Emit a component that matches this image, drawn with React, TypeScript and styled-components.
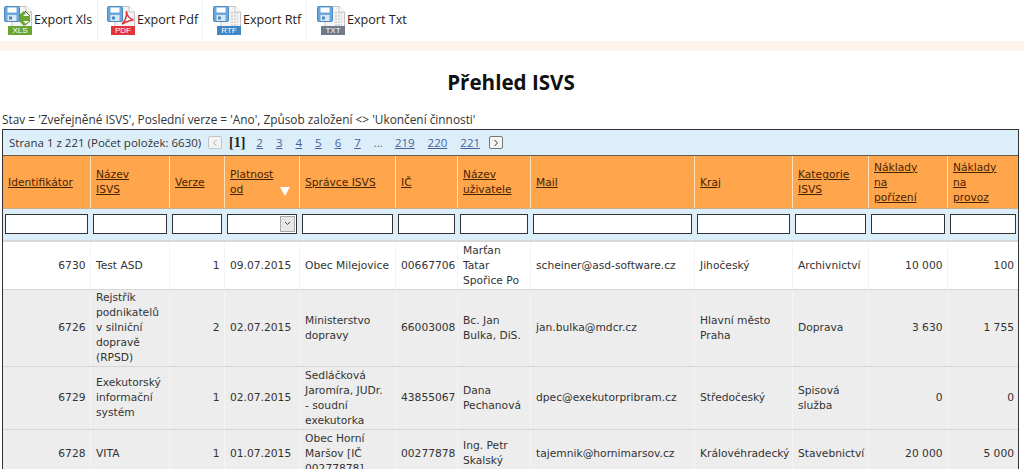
import React from "react";
import styled, { createGlobalStyle } from "styled-components";

const GlobalStyle = createGlobalStyle`
  html, body {
    margin: 0;
    padding: 0;
    height: 469px;
    overflow: hidden;
    background: #fff;
    font-family: "DejaVu Sans", Verdana, sans-serif;
    font-size: 10.7px;
    color: #333;
  }
`;

const Toolbar = styled.div`
  display: flex;
  height: 41px;
  background: #fff;
`;

const ExportButton = styled.div<{ $width: number; $pad: number; $last?: boolean }>`
  display: flex;
  align-items: flex-start;
  width: ${(p) => p.$width}px;
  padding: 7px 0 0 ${(p) => p.$pad}px;
  box-sizing: border-box;
  border-right: 1px solid ${(p) => (p.$last ? "transparent" : "#eef2f6")};
  font-family: "Open Sans", sans-serif;
  font-size: 12.6px;
  line-height: 26px;
  color: #222;
  white-space: nowrap;

  svg {
    flex: none;
    margin-top: -1px;
  }
`;

const Band = styled.div`
  height: 10px;
  background: #fdf3ea;
`;

const Title = styled.h1`
  margin: 0;
  padding: 19px 2px 0 0;
  height: 40px;
  text-align: center;
  font-family: "Open Sans", sans-serif;
  font-weight: 700;
  font-size: 20.6px;
  line-height: 24px;
  color: #111;
`;

const FilterNote = styled.div`
  height: 19px;
  padding: 0 0 0 2px;
  font-family: "Open Sans", sans-serif;
  font-size: 11.85px;
  line-height: 18px;
  color: #333;
  white-space: nowrap;
`;

const Grid = styled.div`
  width: 1015px;
  margin-left: 2px;
  border: 1px solid #333;
  border-bottom: none;
  background: #fff;
`;

const Pager = styled.div`
  display: flex;
  align-items: center;
  height: 25px;
  padding-left: 6px;
  background: #ddeefb;
  border-bottom: 1px solid #6b5a45;
  font-family: "Open Sans", sans-serif;
  font-size: 11.5px;
  color: #333;
`;

const PagerInfo = styled.span`
  width: 199px;
  white-space: nowrap;
`;

const PagerArrow = styled.span<{ $off?: boolean }>`
  display: flex;
  align-items: center;
  justify-content: center;
  width: 14px;
  height: 13px;
  box-sizing: border-box;
  border: 1px solid ${(p) => (p.$off ? "#c4c4c4" : "#777")};
  background: #f4f4f4;
  border-radius: 2px;
  color: ${(p) => (p.$off ? "#aaa" : "#333")};
`;

const PageCurrent = styled.b`
  font-family: "Liberation Serif", serif;
  font-size: 14px;
  margin: 0 11px 0 7px;
  color: #222;
`;

const PageLink = styled.a<{ $gap?: number }>`
  margin-right: ${(p) => p.$gap ?? 13}px;
  color: #4a5f9c;
  text-decoration: underline;
`;

const Dots = styled.span`
  margin-right: 12px;
  color: #666;
`;

const Table = styled.table`
  border-collapse: collapse;
  table-layout: fixed;
  width: 1015px;
`;

const HeadCell = styled.th`
  height: 52px;
  padding: 1px 4px 0 5.5px;
  box-sizing: border-box;
  position: relative;
  background: #ffa64d;
  border-left: 1px solid #ffe2bd;
  border-bottom: 1px solid #c9b08c;
  text-align: left;
  vertical-align: middle;
  font-weight: 400;
  font-size: 10.7px;
  line-height: 15px;
  white-space: pre-line;

  &:first-child {
    border-left: none;
    padding-left: 5px;
  }

  a {
    color: #4a2300;
    text-decoration: underline;
  }
`;

const SortMark = styled.span`
  position: absolute;
  right: 9px;
  bottom: 12px;
  width: 0;
  height: 0;
  border-left: 5px solid transparent;
  border-right: 5px solid transparent;
  border-top: 9px solid #fff;
`;

const FilterCell = styled.td`
  height: 33px;
  padding: 0 2px 0 3px;
  box-sizing: border-box;
  position: relative;
  background: #ddeefb;
  border-bottom: 2px solid #d8d8d8;
  vertical-align: middle;

  &:first-child {
    padding-left: 2px;
  }
`;

const FilterInput = styled.input`
  display: block;
  width: 100%;
  height: 20px;
  margin-top: -1px;
  box-sizing: border-box;
  border: 1px solid #333;
  background: #fff;
  padding: 0;
`;

const SelectButton = styled.span`
  position: absolute;
  right: 4px;
  top: 7px;
  width: 15px;
  height: 16px;
  box-sizing: border-box;
  display: flex;
  align-items: center;
  justify-content: center;
  background: #e8e8e8;
  border: 1px solid #aaa;
`;

const Row = styled.tr<{ $shaded?: boolean; $height: number }>`
  height: ${(p) => p.$height}px;
  background: ${(p) => (p.$shaded ? "#ededed" : "#fff")};
`;

const Cell = styled.td<{ $right?: boolean }>`
  padding: 0 4px 0 5.5px;
  box-sizing: border-box;
  border-left: 1px solid #f4f4f4;
  border-bottom: 1px solid #d6d6d6;
  text-align: ${(p) => (p.$right ? "right" : "left")};
  vertical-align: middle;
  font-size: 10.7px;
  line-height: 15px;
  color: #333;
  overflow: hidden;
  white-space: pre-line;

  &:first-child {
    border-left: none;
  }
`;

const Floppy = () => (
  <>
    <rect x="0.5" y="0.5" width="15" height="15" rx="1" fill="#6aa7dc" stroke="#4d88bd" />
    <rect x="3.5" y="1.5" width="9" height="5" fill="#fff" />
    <rect x="3.5" y="9" width="9" height="6" fill="#dbe8f4" />
    <rect x="5" y="10.5" width="3" height="3" fill="#4d88bd" />
  </>
);

type IconProps = {
  label: string;
  color: string;
  mark: "xls" | "pdf" | "text";
};

const ExportIcon = ({ label, color, mark }: IconProps) => (
  <svg width="30" height="30" viewBox="0 0 30 30">
    <path d="M8 0.5h14l5.5 5.5v15H8z" fill="#f4f4f4" stroke="#c4c4c4" />
    <path d="M22 0.5v5.500h5.500" fill="#fff" stroke="#c4c4c4" />
    {mark === "xls" && (
      <>
        <path d="M15 9l5-4 2 2-3 3h7v5h-7l3 3-2 2-5-5z" fill="#6aa533" />
        <path d="M21 5l5 5M26 15l-5 4" stroke="#3f7a1c" strokeWidth="1" />
      </>
    )}
    {mark === "pdf" && (
      <path
        d="M15 18c3-3 5-8 4.500-13M19.500 5c0 4 3 8 7 9M15 18c4-2 8-4 11.500-4"
        fill="none"
        stroke="#e0333c"
        strokeWidth="1.5"
      />
    )}
    {mark === "text" && (
      <path
        d="M18 7h7M18 10h7M18 13h7M18 16h7M18 19h7"
        stroke="#b5b5b5"
        strokeWidth="1.2"
        strokeDasharray="2 1"
      />
    )}
    <Floppy />
    <rect x="4" y="20" width="24" height="9" fill={color} />
    <text
      x="16"
      y="27.400"
      textAnchor="middle"
      fontFamily="'Liberation Sans', sans-serif"
      fontSize="8"
      fill="#fff"
    >
      {label}
    </text>
  </svg>
);

const exportsList: (IconProps & { text: string; width: number; pad: number })[] = [
  { text: "Export Xls", label: "XLS", color: "#6aa533", mark: "xls", width: 98, pad: 4 },
  { text: "Export Pdf", label: "PDF", color: "#e0333c", mark: "pdf", width: 105, pad: 9 },
  { text: "Export Rtf", label: "RTF", color: "#3d85c6", mark: "text", width: 104, pad: 10 },
  { text: "Export Txt", label: "TXT", color: "#6d7b8a", mark: "text", width: 110, pad: 10 },
];

const columns = [87, 79, 55, 75, 96, 62, 73, 164, 98, 76, 79, 71];

const headers = [
  "Identifikátor",
  "Název\nISVS",
  "Verze",
  "Platnost\nod",
  "Správce ISVS",
  "IČ",
  "Název\nuživatele",
  "Mail",
  "Kraj",
  "Kategorie\nISVS",
  "Náklady\nna\npořízení",
  "Náklady\nna\nprovoz",
];

const rows: { height: number; cells: string[] }[] = [
  {
    height: 48,
    cells: ["6730", "Test ASD", "1", "09.07.2015", "Obec Milejovice", "00667706", "Marťan Tatar Spořice Po", "scheiner@asd-software.cz", "Jihočeský", "Archivnictví", "10 000", "100"],
  },
  {
    height: 77,
    cells: ["6726", "Rejstřík podnikatelů v silniční dopravě (RPSD)", "2", "02.07.2015", "Ministerstvo dopravy", "66003008", "Bc. Jan Bulka, DiS.", "jan.bulka@mdcr.cz", "Hlavní město Praha", "Doprava", "3 630", "1 755"],
  },
  {
    height: 63,
    cells: ["6729", "Exekutorský informační systém", "1", "02.07.2015", "Sedláčková\nJaromíra, JUDr.\n- soudní\nexekutorka", "43855067", "Dana Pechanová", "dpec@exekutorpribram.cz", "Středočeský", "Spisová služba", "0", "0"],
  },
  {
    height: 48,
    cells: ["6728", "VITA", "1", "01.07.2015", "Obec Horní Maršov [IČ 00277878]", "00277878", "Ing. Petr Skalský", "tajemnik@hornimarsov.cz", "Královéhradecký", "Stavebnictví", "20 000", "5 000"],
  },
];

const rightAligned = new Set([0, 2, 10, 11]);
const pages = ["2", "3", "4", "5", "6", "7"];

const App = () => (
  <>
    <GlobalStyle />
    <Toolbar>
      {exportsList.map((item, i) => (
        <ExportButton
          key={item.text}
          $width={item.width}
          $pad={item.pad}
          $last={i === exportsList.length - 1}
        >
          <ExportIcon label={item.label} color={item.color} mark={item.mark} />
          {item.text}
        </ExportButton>
      ))}
    </Toolbar>
    <Band />
    <Title>Přehled ISVS</Title>
    <FilterNote>
      Stav = 'Zveřejněné ISVS', Poslední verze = 'Ano', Způsob založení &lt;&gt; 'Ukončení činnosti'
    </FilterNote>
    <Grid>
      <Pager>
        <PagerInfo>Strana 1 z 221 (Počet položek: 6630)</PagerInfo>
        <PagerArrow $off>
          <svg width="6" height="8" viewBox="0 0 6 8">
            <path d="M4.5 1L1.5 4l3 3" fill="none" stroke="currentColor" />
          </svg>
        </PagerArrow>
        <PageCurrent>[1]</PageCurrent>
        {pages.map((page) => (
          <PageLink key={page}>{page}</PageLink>
        ))}
        <Dots>...</Dots>
        <PageLink>219</PageLink>
        <PageLink>220</PageLink>
        <PageLink $gap={9}>221</PageLink>
        <PagerArrow>
          <svg width="6" height="8" viewBox="0 0 6 8">
            <path d="M1.5 1l3 3-3 3" fill="none" stroke="currentColor" />
          </svg>
        </PagerArrow>
      </Pager>
      <Table>
        <colgroup>
          {columns.map((width, i) => (
            <col key={i} style={{ width }} />
          ))}
        </colgroup>
        <thead>
          <tr>
            {headers.map((header, i) => (
              <HeadCell key={header}>
                <a>{header}</a>
                {i === 3 && <SortMark />}
              </HeadCell>
            ))}
          </tr>
          <tr>
            {headers.map((header, i) => (
              <FilterCell key={header}>
                <FilterInput />
                {i === 3 && (
                  <SelectButton>
                    <svg width="7" height="5" viewBox="0 0 7 5">
                      <path d="M1 1l2.5 2.5L6 1" fill="none" stroke="#444" />
                    </svg>
                  </SelectButton>
                )}
              </FilterCell>
            ))}
          </tr>
        </thead>
        <tbody>
          {rows.map((row, r) => (
            <Row key={row.cells[0]} $height={row.height} $shaded={r > 0}>
              {row.cells.map((cell, i) => (
                <Cell key={i} $right={rightAligned.has(i)}>
                  {cell}
                </Cell>
              ))}
            </Row>
          ))}
        </tbody>
      </Table>
    </Grid>
  </>
);

export default App;
